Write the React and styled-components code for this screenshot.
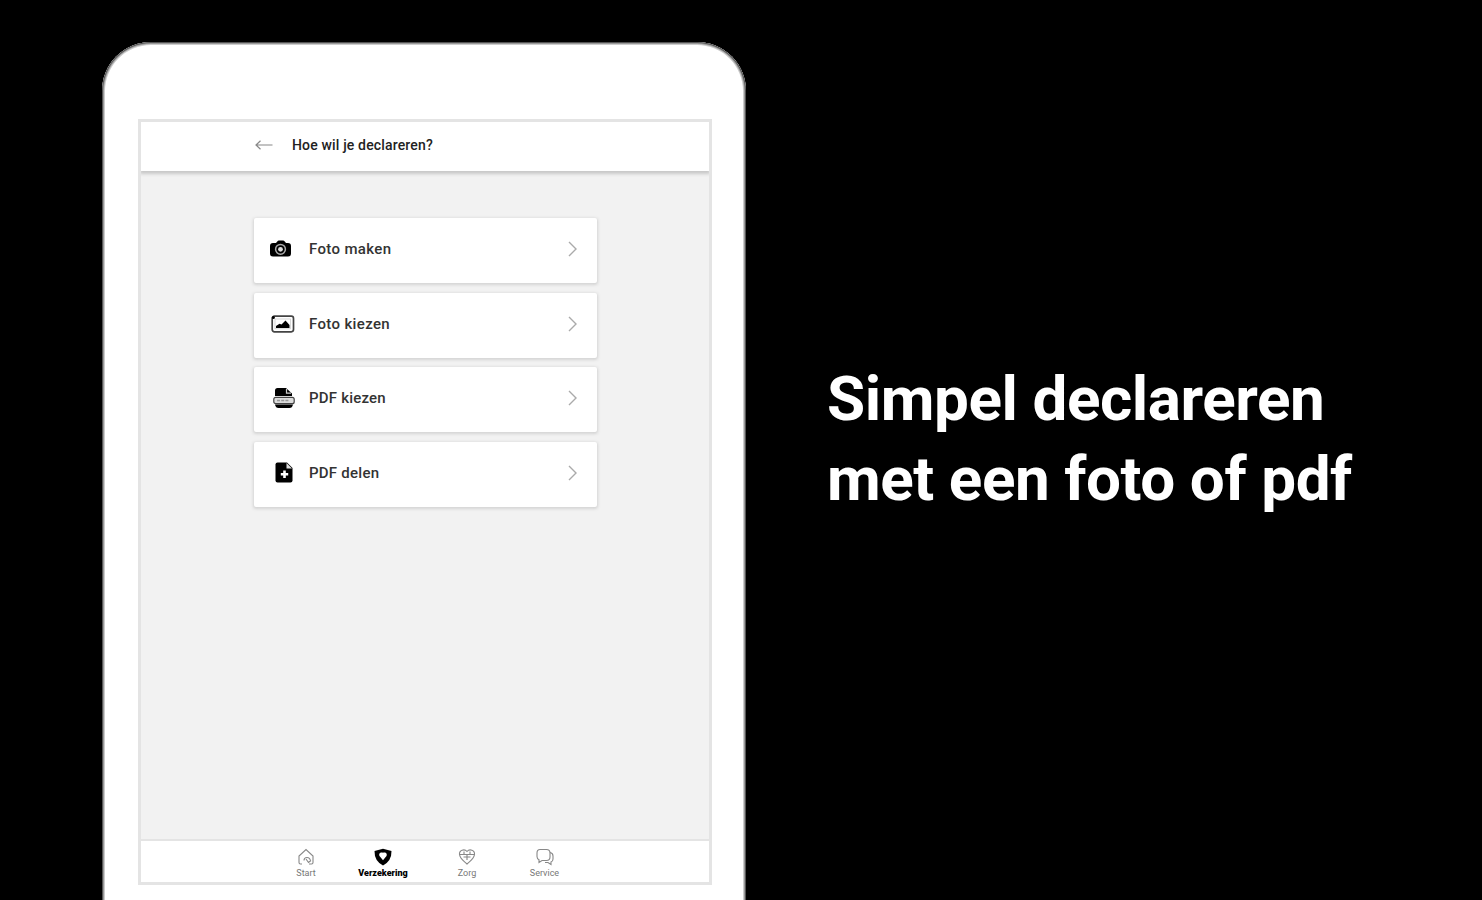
import React from "react"
import styled, { createGlobalStyle } from "styled-components"

const GlobalStyle = createGlobalStyle`
  * {
    box-sizing: border-box;
  }

  body {
    margin: 0;
    background-color: #000;
    font-family: Roboto, "Liberation Sans", sans-serif;
  }
`

const Wrapper = styled.main`
  width: 1482px;
  height: 900px;
  display: flex;
  align-items: flex-start;
  overflow: hidden;
  background-color: #000;
`

const Tablet = styled.div`
  width: 644px;
  height: 940px;
  flex-shrink: 0;
  margin: 42px 0 0 102px;
  padding: 77px 34px 0 36px;
  border-radius: 49px;
  background-color: #fff;
  box-shadow: inset 0 0 0 1px #555, inset 0 0 0 2px #999, inset 0 0 0 3px #ccc;
`

const Screen = styled.div`
  width: 574px;
  height: 766px;
  display: flex;
  flex-direction: column;
  border: 3px solid #e4e4e4;
  background-color: #f2f2f2;
`

const Header = styled.header`
  height: 49px;
  display: flex;
  align-items: center;
  gap: 19px;
  padding: 0 0 4px 114px;
  background-color: #fff;
  box-shadow: 0 2px 3px 1px #c8c8c8;
  clip-path: inset(0 0 -8px 0);
`

const Title = styled.h1`
  margin: 0;
  font-size: 14px;
  font-weight: 500;
  letter-spacing: 0.16px;
  color: #222;
`

const List = styled.ul`
  flex: 1;
  display: flex;
  flex-direction: column;
  gap: 9.5px;
  width: 343px;
  margin: 0 0 0 113px;
  padding: 47px 0 0;
  list-style: none;
`

const Card = styled.li`
  height: 65px;
  display: flex;
  align-items: center;
  padding: 0 20px 3px 15px;
  border-radius: 2px;
  background-color: #fff;
  box-shadow: 0 1px 3px 1px #d4d4d4;
`

const IconBox = styled.span`
  width: 40px;
  display: flex;
  padding-left: ${({ $indent }) => $indent}px;
`

const Label = styled.span`
  flex: 1;
  font-size: 15px;
  font-weight: 500;
  letter-spacing: ${({ $spacing }) => $spacing}px;
  color: #333;
`

const TabBar = styled.nav`
  height: 43px;
  display: flex;
  padding: 7px 0 0 125px;
  border-top: 2px solid #e4e4e4;
  background-color: #fff;
`

const Tab = styled.div`
  width: ${({ $width }) => $width}px;
  display: flex;
  flex-direction: column;
  align-items: center;
  gap: 2px;
  font-size: 9px;
  line-height: 11px;
  font-weight: ${({ $active }) => ($active ? 900 : 400)};
  color: ${({ $active }) => ($active ? "#000" : "#777")};
`

const Headline = styled.h2`
  margin: 359px 0 0 81px;
  font-size: 62px;
  line-height: 80px;
  font-weight: 700;
  letter-spacing: -0.43px;
  white-space: nowrap;
  color: #fff;
`

const ArrowIcon = () => (
  <svg width="18" height="12" viewBox="0 0 18 12" fill="none" stroke="#888" strokeWidth="1.2">
    <path d="M17.5 6H1M5.500 1.800L1 6l4.500 4.200" />
  </svg>
)

const ChevronIcon = () => (
  <svg width="9" height="16" viewBox="0 0 9 16" fill="none" stroke="#aaa" strokeWidth="1.4">
    <path d="M1 1L8 8L1 15" />
  </svg>
)

const CameraIcon = () => (
  <svg width="23" height="18" viewBox="0 0 23 18">
    <path
      d="M4 3h3l1.500-1.800q.5-.7 1.300-.7h4.400q.8 0 1.300.7L17 3h2q3 0 3 3v7.500q0 3-3 3H4q-3 0-3-3V6q0-3 3-3z"
      fill="#000"
    />
    <circle cx="11.500" cy="9.300" r="4.900" fill="#000" stroke="#aaa" strokeWidth="1.500" />
    <circle cx="11.500" cy="9.300" r="2.400" fill="#ddd" />
  </svg>
)

const PictureIcon = () => (
  <svg width="24" height="18" viewBox="0 0 24 18">
    <rect x="1.200" y="1.200" width="21.300" height="15.600" rx="2.200" fill="#fff" stroke="#444" strokeWidth="1.700" />
    <rect x="4" y="4" width="15.500" height="9.800" fill="none" stroke="#ccc" strokeWidth=".8" />
    <path d="M5 13V11l3.500-2.200 2 .8 4-4.200L18.500 10v3z" fill="#000" />
    <circle cx="2.400" cy="2.400" r="1.500" fill="#000" />
  </svg>
)

const PdfIcon = () => (
  <svg width="22" height="22" viewBox="0 0 22 22">
    <path d="M2 9V3.500Q2 1 4.500 1H13l6 5.500V9z" fill="#000" />
    <path d="M13.500 2v4.200H18" fill="none" stroke="#ccc" strokeWidth="1.200" />
    <rect x=".8" y="10.300" width="20.400" height="6.400" rx="2" fill="#ddd" stroke="#444" strokeWidth="1.200" />
    <path d="M4 13.500h12" stroke="#999" strokeWidth="1.600" strokeDasharray="3 1.200" />
    <path d="M2 17.500h18q-.7 3.500-3.500 3.500h-11Q2.700 21 2 17.500z" fill="#000" />
  </svg>
)

const FilePlusIcon = () => (
  <svg width="18" height="21" viewBox="0 0 18 21">
    <path d="M2.500.5H12L17.500 6v12.500q0 2-2 2h-13q-2 0-2-2v-16q0-2 2-2z" fill="#000" />
    <path d="M11.500 1v5.500H17" fill="#ddd" />
    <path d="M9.500 8.500v7.500M5.800 12.200h7.400" stroke="#fff" strokeWidth="2.600" />
  </svg>
)

const HomeIcon = () => (
  <svg width="18" height="18" viewBox="0 0 18 18" fill="none" stroke="#888" strokeWidth="1.100">
    <path d="M5 16H3.500Q2 16 2 14.500V8L9 1.500 16 8v6.500q0 1.500-1.500 1.500H12" />
    <path d="M7 12.500q0-3 3-3t3.500 3.500M9 11l2.500 3.500L14 12.500" />
  </svg>
)

const ShieldIcon = () => (
  <svg width="18" height="18" viewBox="0 0 18 18">
    <path d="M9 .8L17.500 3q.2 10-8.500 14.500Q.3 13 .5 3z" fill="#000" />
    <path
      d="M9 4.800c2.200-1.200 4.700.7 3.500 3.200L9 12.200 5.500 8c-1.200-2.500 1.300-4.400 3.500-3.200z"
      fill="#fff"
    />
  </svg>
)

const HeartIcon = () => (
  <svg width="18" height="18" viewBox="0 0 18 18" fill="none" stroke="#888" strokeWidth="1.100">
    <path d="M9 3.500C6.500.5 1 2 1.500 6.500 2 11 6 13 9 16c3-3 7-5 7.500-9.500C17 2 11.500.5 9 3.500z" />
    <path d="M1.500 6.500h15M5.500 9h7M9 6.500V12M6 3.500v3M12 3.500v3" />
  </svg>
)

const ChatIcon = () => (
  <svg width="18" height="18" viewBox="0 0 18 18" fill="none" stroke="#888" strokeWidth="1.100">
    <path d="M4 1.500h6.500Q14 1.500 14 5v4q0 3.500-3.500 3.500H6L3 14.500v-2.800Q1 11 1 8.500V5q0-3.500 3-3.500z" />
    <path d="M14 4.500q3 .5 3 3.500v3q0 2.500-2 3v2.500L12 14.500H9" />
  </svg>
)

const options = [
  { label: "Foto maken", icon: <CameraIcon />, indent: 0, spacing: 0.35 },
  { label: "Foto kiezen", icon: <PictureIcon />, indent: 2, spacing: 0.35 },
  { label: "PDF kiezen", icon: <PdfIcon />, indent: 4, spacing: 0.2 },
  { label: "PDF delen", icon: <FilePlusIcon />, indent: 6, spacing: 0.25 },
]

const tabs = [
  { label: "Start", icon: <HomeIcon />, width: 80 },
  { label: "Verzekering", icon: <ShieldIcon />, width: 74, active: true },
  { label: "Zorg", icon: <HeartIcon />, width: 94 },
  { label: "Service", icon: <ChatIcon />, width: 61 },
]

const App = () => (
  <>
    <GlobalStyle />
    <Wrapper>
      <Tablet>
        <Screen>
          <Header>
            <ArrowIcon />
            <Title>Hoe wil je declareren?</Title>
          </Header>
          <List>
            {options.map(({ label, icon, indent, spacing }) => (
              <Card key={label}>
                <IconBox $indent={indent}>{icon}</IconBox>
                <Label $spacing={spacing}>{label}</Label>
                <ChevronIcon />
              </Card>
            ))}
          </List>
          <TabBar>
            {tabs.map(({ label, icon, width, active }) => (
              <Tab key={label} $width={width} $active={active}>
                {icon}
                <span>{label}</span>
              </Tab>
            ))}
          </TabBar>
        </Screen>
      </Tablet>
      <Headline>
        Simpel declareren
        <br />
        met een foto of pdf
      </Headline>
    </Wrapper>
  </>
)

export default App
